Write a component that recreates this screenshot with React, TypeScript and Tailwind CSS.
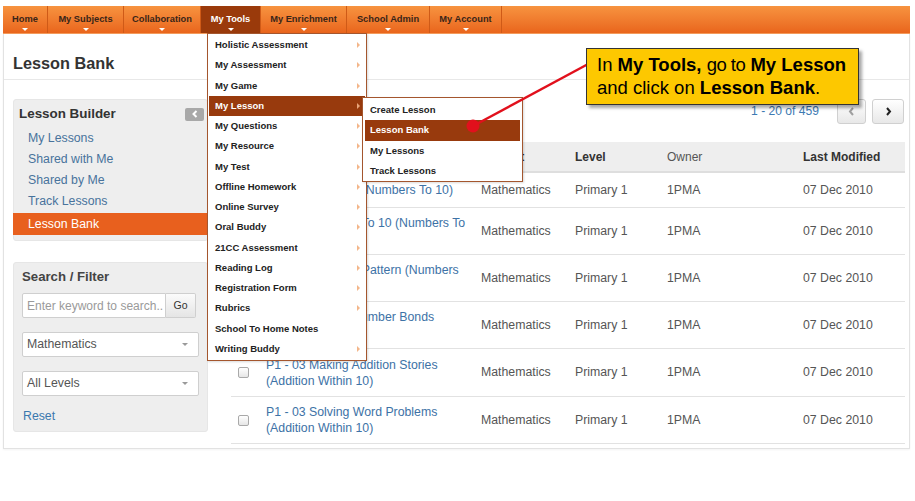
import React from 'react';

const navItems = [
  { label: 'Home', w: 'w-[45px]' },
  { label: 'My Subjects', w: 'w-[76px]' },
  { label: 'Collaboration', w: 'w-[77px]' },
  { label: 'My Tools', w: 'w-[60px]', active: true },
  { label: 'My Enrichment', w: 'w-[86px]' },
  { label: 'School Admin', w: 'w-[83px]' },
  { label: 'My Account', w: 'w-[72px]' },
];

const menuItems: { label: string; arrow: boolean; active?: boolean }[] = [
  { label: 'Holistic Assessment', arrow: true },
  { label: 'My Assessment', arrow: true },
  { label: 'My Game', arrow: true },
  { label: 'My Lesson', arrow: true, active: true },
  { label: 'My Questions', arrow: true },
  { label: 'My Resource', arrow: true },
  { label: 'My Test', arrow: true },
  { label: 'Offline Homework', arrow: true },
  { label: 'Online Survey', arrow: true },
  { label: 'Oral Buddy', arrow: true },
  { label: '21CC Assessment', arrow: true },
  { label: 'Reading Log', arrow: true },
  { label: 'Registration Form', arrow: true },
  { label: 'Rubrics', arrow: true },
  { label: 'School To Home Notes', arrow: false },
  { label: 'Writing Buddy', arrow: true },
];

const subItems = [
  { label: 'Create Lesson' },
  { label: 'Lesson Bank', active: true },
  { label: 'My Lessons' },
  { label: 'Track Lessons' },
];

const rows = [
  { title: 'P1 - 01 Counting (Numbers To 10)', h: 'h-[35px]' },
  { title: 'P1 - 01 Counting To 10 (Numbers To 10)', h: 'h-[47px]' },
  { title: 'P1 - 01 Counting Pattern (Numbers To 10)', h: 'h-[47px]' },
  { title: 'P1 - 02 Making Number Bonds (Numbers To 10)', h: 'h-[47px]' },
  { title: 'P1 - 03 Making Addition Stories (Addition Within 10)', h: 'h-[48px]' },
  { title: 'P1 - 03 Solving Word Problems (Addition Within 10)', h: 'h-[47px]' },
];

function Caret() {
  return (
    <span className="w-0 h-0 border-l-[3px] border-r-[3px] border-t-[3px] border-l-transparent border-r-transparent border-t-[#9a9a9a]" />
  );
}

function Select({ label }: { label: string }) {
  return (
    <div className="h-[25px] w-[177px] bg-white border border-[#cfcfcf] rounded-[2px] flex items-center justify-between pl-[4px] pr-[10px] text-[12.3px] text-[#555]">
      <span>{label}</span>
      <Caret />
    </div>
  );
}

export default function App() {
  return (
    <div className="relative w-[915px] h-[501px] overflow-hidden bg-white font-['Liberation_Sans',Arial,sans-serif]">
      <div className="ml-[3px] mt-[6px] w-[907px]">
        {/* Nav */}
        <div className="h-[28px] flex bg-gradient-to-b from-[#f7933f] to-[#e9651c] border-b border-[#f39a5b]">
          {navItems.map((n) => (
            <div
              key={n.label}
              className={`${n.w} h-full flex flex-col items-center pt-[7px] border-r border-[#cf5a17] ${
                n.active ? 'bg-[#9a3a0b] text-white' : 'text-[#3a2518]'
              }`}
            >
              <span className="text-[9.3px] leading-[12px] font-bold whitespace-nowrap">{n.label}</span>
              <span className="mt-[3px] w-0 h-0 border-l-[3px] border-r-[3px] border-t-[3px] border-l-transparent border-r-transparent border-t-white" />
            </div>
          ))}
        </div>

        {/* Body */}
        <div className="border-x border-b border-[#e2e2e2] h-[415px] shadow-[0_1px_2px_rgba(0,0,0,0.05)]">
          <div className="h-[46px] border-b border-[#e8e8e8] pl-[9px] pt-[19px]">
            <h1 className="text-[16.3px] leading-[20px] font-bold text-[#333]">Lesson Bank</h1>
          </div>

          <div className="flex pl-[9px] pt-[19px]">
            {/* Sidebar */}
            <div className="w-[195px] flex flex-col">
              <div className="bg-[#eeeeee] rounded-[3px] border border-[#e6e6e6] h-[142px] pt-[5px] pb-[5px]">
                <div className="flex items-center justify-between pl-[5px] pr-[3px]">
                  <span className="text-[13.4px] leading-[18px] font-bold text-[#333]">Lesson Builder</span>
                  <span className="w-[19px] h-[13px] bg-[#a8a8a8] rounded-[2px] flex items-center justify-center">
                    <svg width="6" height="8" viewBox="0 0 6 8">
                      <path d="M4.5 1 L1.5 4 L4.5 7" stroke="white" strokeWidth="2" fill="none" />
                    </svg>
                  </span>
                </div>
                <div className="mt-[5px] flex flex-col text-[12.3px] leading-[21px] text-[#48739c]">
                  <span className="pl-[14px]">My Lessons</span>
                  <span className="pl-[14px]">Shared with Me</span>
                  <span className="pl-[14px]">Shared by Me</span>
                  <span className="pl-[14px]">Track Lessons</span>
                  <span className="mt-[1px] h-[22px] bg-[#e8601e] text-white pl-[14px] leading-[22px] -mx-[1px]">
                    <span className="pl-[1px]">Lesson Bank</span>
                  </span>
                </div>
              </div>

              <div className="mt-[21px] bg-[#eeeeee] rounded-[3px] border border-[#e6e6e6] h-[170px] px-[8px] pt-[5px]">
                <div className="text-[13.2px] leading-[17px] font-bold text-[#444]">Search / Filter</div>
                <div className="mt-[8px] flex h-[25px]">
                  <div className="w-[144px] h-full bg-white border border-[#cfcfcf] rounded-l-[2px] flex items-center pl-[4px] text-[12px] text-[#9a9a9a] whitespace-nowrap overflow-hidden">
                    Enter keyword to search..
                  </div>
                  <div className="w-[30px] h-full border border-l-0 border-[#cfcfcf] rounded-r-[2px] bg-gradient-to-b from-[#fbfbfb] to-[#e5e5e5] flex items-center justify-center text-[10.5px] text-[#333]">
                    Go
                  </div>
                </div>
                <div className="mt-[14px]">
                  <Select label="Mathematics" />
                </div>
                <div className="mt-[14px]">
                  <Select label="All Levels" />
                </div>
                <div className="mt-[12px] pl-[1px] text-[12.3px] leading-[16px] text-[#3a78ae]">Reset</div>
              </div>
            </div>

            {/* Main */}
            <div className="ml-[23px] w-[674px]">
              <div className="h-[25px] flex items-center justify-end">
                <span className="text-[12.1px] text-[#3d7ab3]">1 - 20 of 459</span>
                <span className="ml-[18px] w-[29px] h-[25px] border border-[#d0d0d0] rounded-[3px] bg-gradient-to-b from-white to-[#e8e8e8] flex items-center justify-center">
                  <svg width="7" height="9" viewBox="0 0 7 9">
                    <path d="M5 1 L2 4.5 L5 8" stroke="#a0a0a0" strokeWidth="2" fill="none" />
                  </svg>
                </span>
                <span className="ml-[6px] mr-[1px] w-[32px] h-[25px] border border-[#d0d0d0] rounded-[3px] bg-gradient-to-b from-white to-[#e8e8e8] flex items-center justify-center">
                  <svg width="7" height="9" viewBox="0 0 7 9">
                    <path d="M2 1 L5 4.5 L2 8" stroke="#222" strokeWidth="2" fill="none" />
                  </svg>
                </span>
              </div>

              <div className="mt-[18px]">
                <div className="grid grid-cols-[35px_215px_94px_92px_136px_102px] h-[31px] items-center bg-[#eeeeee] border-b-2 border-[#dedede] text-[12px] text-[#333]">
                  <span />
                  <span />
                  <span className="font-bold">Subject</span>
                  <span className="font-bold">Level</span>
                  <span className="text-[#555]">Owner</span>
                  <span className="font-bold">Last Modified</span>
                </div>
                {rows.map((r, i) => (
                  <div
                    key={i}
                    className={`grid grid-cols-[35px_215px_94px_92px_136px_102px] ${r.h} items-center border-b border-[#e2e2e2] text-[12.3px] text-[#555]`}
                  >
                    <span className="pl-[7px] flex">
                      <span className="w-[11px] h-[11px] rounded-[2px] border border-[#a9a9a9] bg-gradient-to-b from-white to-[#e6e6e6]" />
                    </span>
                    <span className="pr-[10px] leading-[16px] text-[#3d72a6]">{r.title}</span>
                    <span>Mathematics</span>
                    <span>Primary 1</span>
                    <span>1PMA</span>
                    <span>07 Dec 2010</span>
                  </div>
                ))}
              </div>
            </div>
          </div>
        </div>
      </div>

      {/* Dropdown menu */}
      <div className="absolute left-[207px] top-[33px] w-[160px] h-[328px] bg-white border border-[#a4562e] px-[1px] pt-[1px] shadow-[1px_1px_2px_rgba(0,0,0,0.15)]">
        {menuItems.map((m) => (
          <div
            key={m.label}
            className={`h-[20.25px] flex items-center justify-between pl-[6px] pr-[5px] text-[9.5px] font-bold whitespace-nowrap ${
              m.active ? 'bg-[#983a0d] text-white' : 'text-[#222]'
            }`}
          >
            <span>{m.label}</span>
            {m.arrow && (
              <span
                className={`w-0 h-0 border-t-[3px] border-b-[3px] border-l-[3px] border-t-transparent border-b-transparent ${
                  m.active ? 'border-l-[#e9a57a]' : 'border-l-[#f3b68a]'
                }`}
              />
            )}
          </div>
        ))}
      </div>

      {/* Submenu */}
      <div className="absolute left-[362px] top-[97px] w-[161px] h-[85px] bg-white border border-[#a4562e] px-[2px] pt-[2px] shadow-[1px_1px_2px_rgba(0,0,0,0.15)]">
        {subItems.map((s) => (
          <div
            key={s.label}
            className={`h-[20.25px] flex items-center pl-[5px] text-[9.5px] font-bold whitespace-nowrap ${
              s.active ? 'bg-[#983a0d] text-white' : 'text-[#222]'
            }`}
          >
            {s.label}
          </div>
        ))}
      </div>

      {/* Pointer line and dot */}
      <svg className="absolute left-0 top-0 pointer-events-none" width="915" height="501">
        <line x1="473" y1="126" x2="590" y2="63" stroke="#e1101c" strokeWidth="2.5" />
        <circle cx="473" cy="126" r="6.5" fill="#e1101c" />
      </svg>

      {/* Callout */}
      <div className="absolute left-[586px] top-[48px] w-[273px] h-[57px] bg-[#fdc800] border border-[#333] shadow-[3px_3px_3px_rgba(0,0,0,0.35)] pl-[10px] pt-[4px] text-[18.5px] leading-[23px] text-black whitespace-nowrap">
        <div>
          In <b>My Tools,</b> <span className="tracking-[-0.5px]">go to</span> <b>My Lesson</b>
        </div>
        <div>
          and click on <b>Lesson Bank</b>.
        </div>
      </div>
    </div>
  );
}
